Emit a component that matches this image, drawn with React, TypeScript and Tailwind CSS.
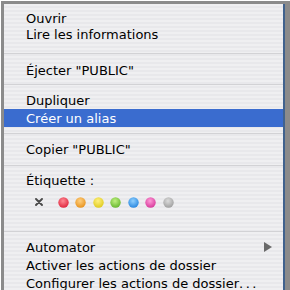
import React from "react";

const Sep = ({ top, bottom }: { top: string; bottom: string }) => (
  <div className={`${top} ${bottom}`}>
    <div className="h-px bg-[#d2d2d5]" />
  </div>
);

function Dot({ c1, c2, id }: { c1: string; c2: string; id: string }) {
  return (
    <svg width="11" height="11" viewBox="0 0 11 11" className="shrink-0">
      <defs>
        <radialGradient id={id} cx="0.45" cy="0.35" r="0.65">
          <stop offset="0" stopColor={c1} />
          <stop offset="1" stopColor={c2} />
        </radialGradient>
      </defs>
      <circle cx="5.5" cy="5.5" r="5.2" fill={`url(#${id})`} />
    </svg>
  );
}

export default function App() {
  const dots = [
    ["#ff8a94", "#e02840"],
    ["#ffd080", "#e89420"],
    ["#fff080", "#e0cc20"],
    ["#c0f080", "#68b830"],
    ["#90d0ff", "#2a88e0"],
    ["#ff9ad8", "#d83c9c"],
    ["#dcdcdc", "#a0a0a0"],
  ];
  return (
    <div
      className="w-[290px] h-[290px] overflow-hidden bg-white pt-px pl-px"
      style={{ fontFamily: '"DejaVu Sans", Verdana, sans-serif' }}
    >
      <div className="h-full border-t-[3px] border-l-[3px] border-r-[5px] border-[#8b8b8b] flex">
        <div className="flex-1 border-r-2 border-[#40628e] bg-[repeating-linear-gradient(to_bottom,#efeff1_0px,#efeff1_2px,#e8e8eb_2px,#e8e8eb_4px)] text-[13px] text-black leading-none pt-[6px]">
          <div className="h-[16px] flex items-center pl-[22px]">Ouvrir</div>
          <div className="h-[16px] flex items-center pl-[22px]">Lire les informations</div>
          <Sep top="pt-[11px]" bottom="pb-[8px]" />
          <div className="h-[17px] flex items-center pl-[22px]">Éjecter "PUBLIC"</div>
          <Sep top="pt-[5px]" bottom="pb-[7px]" />
          <div className="h-[17px] flex items-center pl-[22px]">Dupliquer</div>
          <div className="h-[18px] flex items-center pl-[22px] bg-[#3a6ccf] text-white">Créer un alias</div>
          <Sep top="pt-[6px]" bottom="pb-[7px]" />
          <div className="h-[17px] flex items-center pl-[22px]">Copier "PUBLIC"</div>
          <Sep top="pt-[7px]" bottom="pb-[6px]" />
          <div className="h-[17px] flex items-center pl-[22px]">Étiquette :</div>
          <div className="h-[26px] flex items-center pl-[31px] gap-[6.5px]">
            <svg width="8" height="8" viewBox="0 0 8 8" className="mr-[8px]">
              <path d="M1 1L7 7M7 1L1 7" stroke="#4a4a4a" strokeWidth="1.9" strokeLinecap="round" />
            </svg>
            {dots.map((d, i) => (
              <Dot key={i} id={`g${i}`} c1={d[0]} c2={d[1]} />
            ))}
          </div>
          <Sep top="pt-[16px]" bottom="pb-[6px]" />
          <div className="h-[18px] flex items-center pl-[22px] pr-[11px] justify-between">
            <span>Automator</span>
            <svg width="8" height="10" viewBox="0 0 8 10">
              <path d="M0 0L8 5L0 10Z" fill="#6a6a6a" />
            </svg>
          </div>
          <div className="h-[18px] flex items-center pl-[22px]">Activer les actions de dossier</div>
          <div className="h-[18px] flex items-center pl-[22px] whitespace-nowrap">
            Configurer les actions de dossier<span className="tracking-[2.5px]">...</span>
          </div>
        </div>
      </div>
    </div>
  );
}
